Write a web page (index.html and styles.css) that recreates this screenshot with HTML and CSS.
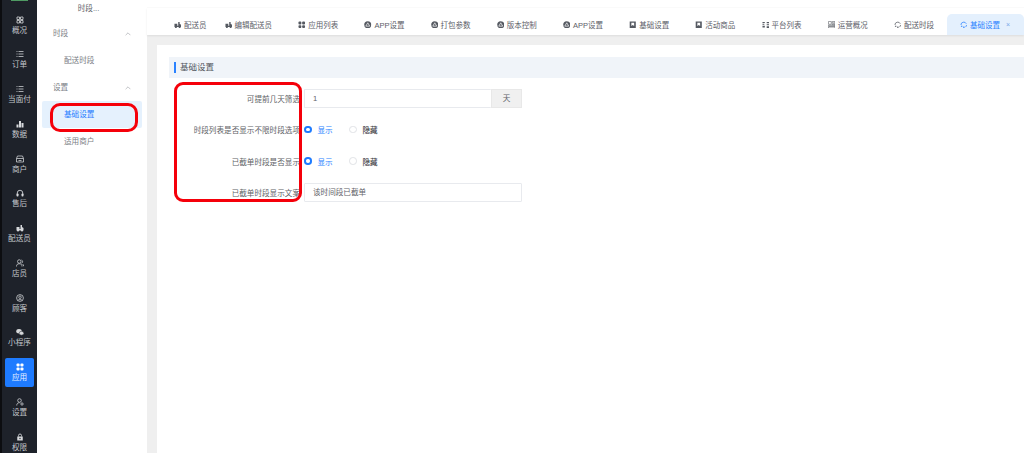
FILE: index.html
```html
<!DOCTYPE html>
<html lang="zh-CN">
<head>
<meta charset="utf-8">
<title>基础设置</title>
<link rel="stylesheet" href="styles.css">
</head>
<body>
<svg class="defs" aria-hidden="true">
  <defs>
    <symbol id="i-grid" viewBox="0 0 16 16"><path d="M2 2h5v5H2zM9 2h5v5H9zM2 9h5v5H2zM9 9h5v5H9z" fill="none" stroke="currentColor" stroke-width="1.6"/></symbol>
    <symbol id="i-list" viewBox="0 0 16 16"><path d="M5 3h10M5 8h10M5 13h10M1 3h2M1 8h2M1 13h2" fill="none" stroke="currentColor" stroke-width="1.5"/></symbol>
    <symbol id="i-bars" viewBox="0 0 16 16"><path d="M1 9h4v6H1zM6 2h4v13H6zM11 6h4v9h-4z" fill="currentColor"/></symbol>
    <symbol id="i-store" viewBox="0 0 16 16"><path d="M3 2h10l2 5v7H1V7zM1 7h14M5 11h6" fill="none" stroke="currentColor" stroke-width="1.5"/></symbol>
    <symbol id="i-head" viewBox="0 0 16 16"><path d="M2.500 10V8a5.500 5.500 0 0 1 11 0v2" fill="none" stroke="currentColor" stroke-width="1.700"/><rect x="1" y="9" width="4" height="6" rx="1.500" fill="currentColor"/><rect x="11" y="9" width="4" height="6" rx="1.500" fill="currentColor"/></symbol>
    <symbol id="i-courier" viewBox="0 0 16 16"><path d="M1 6h6v4h2V2h3v4l3 2v5H1z" fill="currentColor"/><circle cx="4" cy="13" r="2.200" fill="currentColor"/><circle cx="12" cy="13" r="2.200" fill="currentColor"/></symbol>
    <symbol id="i-people" viewBox="0 0 16 16"><circle cx="6.500" cy="5" r="3.500" fill="none" stroke="currentColor" stroke-width="1.500"/><path d="M1 15c0-4 2-5.500 5.500-5.500S12 11 12 15M11 2a3.500 3.500 0 0 1 0 6.500M13 10c1.500.7 2.300 2.500 2.300 4.500" fill="none" stroke="currentColor" stroke-width="1.500"/></symbol>
    <symbol id="i-face" viewBox="0 0 16 16"><circle cx="8" cy="8" r="6.800" fill="none" stroke="currentColor" stroke-width="1.500"/><circle cx="8" cy="6.500" r="2.500" fill="none" stroke="currentColor" stroke-width="1.400"/><path d="M3.500 13c1-2.500 8-2.500 9 0" fill="none" stroke="currentColor" stroke-width="1.400"/></symbol>
    <symbol id="i-chat" viewBox="0 0 16 16"><ellipse cx="6" cy="6.500" rx="5.500" ry="4.500" fill="currentColor"/><ellipse cx="11" cy="10.500" rx="4.700" ry="3.800" fill="currentColor" stroke="#1e222a"/></symbol>
    <symbol id="i-apps" viewBox="0 0 16 16"><rect x="1" y="1" width="6.200" height="6.200" rx="2" fill="currentColor"/><rect x="8.800" y="1" width="6.200" height="6.200" rx="2" fill="currentColor"/><rect x="1" y="8.800" width="6.200" height="6.200" rx="2" fill="currentColor"/><rect x="8.800" y="8.800" width="6.200" height="6.200" rx="2" fill="currentColor"/></symbol>
    <symbol id="i-admin" viewBox="0 0 16 16"><circle cx="7" cy="5" r="3.600" fill="none" stroke="currentColor" stroke-width="1.500"/><path d="M1.500 15c0-4 2.300-5.500 5.500-5.500" fill="none" stroke="currentColor" stroke-width="1.500"/><circle cx="12" cy="12" r="2.300" fill="none" stroke="currentColor" stroke-width="1.500"/></symbol>
    <symbol id="i-lock" viewBox="0 0 16 16"><path d="M5 7V5a3 3 0 0 1 6 0v2" fill="none" stroke="currentColor" stroke-width="1.700"/><path d="M2.500 7h11v8h-11z" fill="currentColor"/><circle cx="8" cy="11" r="1.300" fill="#1e222a"/></symbol>
    <symbol id="i-app" viewBox="0 0 16 16"><circle cx="8" cy="8" r="7.500" fill="currentColor"/><path d="M8 3.800 12.200 11H3.800z" fill="none" stroke="#fff" stroke-width="1.500"/></symbol>
    <symbol id="i-mark" viewBox="0 0 16 16"><path d="M1.500 1h13v14h-13z" fill="currentColor"/><path d="M5 3.500h6v7L8 8.500l-3 2z" fill="#fff"/></symbol>
    <symbol id="i-split" viewBox="0 0 16 16"><path d="M1 2h5v2H1zM1 6h4v2H1zM10 2h5v2h-5zM10 6h5v2h-5zM1 10h5v4H1zM10 10h5v2h-5zM10 13h5v2h-5z" fill="currentColor"/></symbol>
    <symbol id="i-board" viewBox="0 0 16 16"><path d="M1 1h6v6H1zM9 1h6v3H9zM9 6h6v2H9zM1 9h14v2H1zM1 12h14v3H1z" fill="none" stroke="currentColor" stroke-width="1.200"/></symbol>
    <symbol id="i-sync" viewBox="0 0 16 16"><path d="M2 8.500a6 6 0 0 1 11.500-2.500M14 8.500a6 6 0 0 1-2.500 4.500" fill="none" stroke="currentColor" stroke-width="1.600"/><path d="M2 10h3v2H2zM7 11.500h2.500V15H7z" fill="currentColor"/></symbol>
    <symbol id="i-up" viewBox="0 0 10 6"><path d="M1 5 5 1l4 4" fill="none" stroke="currentColor" stroke-width="1"/></symbol>
  </defs>
</svg>

<div class="app">
  <nav class="rail">
    <div class="rail-logo"></div>
    <a class="rail-item"><svg class="rail-icon"><use href="#i-grid"/></svg><span>概况</span></a>
    <a class="rail-item"><svg class="rail-icon"><use href="#i-list"/></svg><span>订单</span></a>
    <a class="rail-item"><svg class="rail-icon"><use href="#i-list"/></svg><span>当面付</span></a>
    <a class="rail-item"><svg class="rail-icon"><use href="#i-bars"/></svg><span>数据</span></a>
    <a class="rail-item"><svg class="rail-icon"><use href="#i-store"/></svg><span>商户</span></a>
    <a class="rail-item"><svg class="rail-icon"><use href="#i-head"/></svg><span>售后</span></a>
    <a class="rail-item"><svg class="rail-icon"><use href="#i-courier"/></svg><span>配送员</span></a>
    <a class="rail-item"><svg class="rail-icon"><use href="#i-people"/></svg><span>店员</span></a>
    <a class="rail-item"><svg class="rail-icon"><use href="#i-face"/></svg><span>顾客</span></a>
    <a class="rail-item"><svg class="rail-icon"><use href="#i-chat"/></svg><span>小程序</span></a>
    <a class="rail-item is-active"><svg class="rail-icon"><use href="#i-apps"/></svg><span>应用</span></a>
    <a class="rail-item"><svg class="rail-icon"><use href="#i-admin"/></svg><span>设置</span></a>
    <a class="rail-item"><svg class="rail-icon"><use href="#i-lock"/></svg><span>权限</span></a>
  </nav>

  <aside class="submenu">
    <div class="submenu-title">时段...</div>
    <div class="submenu-group">时段<svg class="chev"><use href="#i-up"/></svg></div>
    <a class="submenu-item">配送时段</a>
    <div class="submenu-group">设置<svg class="chev"><use href="#i-up"/></svg></div>
    <a class="submenu-item is-active">基础设置</a>
    <a class="submenu-item">适用商户</a>
  </aside>

  <main class="main">
    <div class="topstrip"></div>
    <div class="tabs">
      <a class="tab tab-first"><svg class="tab-icon"><use href="#i-courier"/></svg>配送员</a>
      <a class="tab"><svg class="tab-icon"><use href="#i-courier"/></svg>编辑配送员</a>
      <a class="tab"><svg class="tab-icon"><use href="#i-apps"/></svg>应用列表</a>
      <a class="tab"><svg class="tab-icon"><use href="#i-app"/></svg>APP设置</a>
      <a class="tab"><svg class="tab-icon"><use href="#i-app"/></svg>打包参数</a>
      <a class="tab"><svg class="tab-icon"><use href="#i-app"/></svg>版本控制</a>
      <a class="tab"><svg class="tab-icon"><use href="#i-app"/></svg>APP设置</a>
      <a class="tab"><svg class="tab-icon"><use href="#i-mark"/></svg>基础设置</a>
      <a class="tab"><svg class="tab-icon"><use href="#i-mark"/></svg>活动商品</a>
      <a class="tab"><svg class="tab-icon"><use href="#i-split"/></svg>平台列表</a>
      <a class="tab"><svg class="tab-icon"><use href="#i-board"/></svg>运营概况</a>
      <a class="tab"><svg class="tab-icon"><use href="#i-sync"/></svg>配送时段</a>
      <a class="tab is-active"><svg class="tab-icon"><use href="#i-sync"/></svg>基础设置<span class="tab-close">×</span></a>
    </div>
    <div class="content">
      <section class="card">
        <h2 class="section-title">基础设置</h2>
        <form class="form">
          <div class="form-row">
            <label class="form-label">可提前几天筛选</label>
            <div class="input-group">
              <div class="input input-joined">1</div>
              <div class="addon">天</div>
            </div>
          </div>
          <div class="form-row">
            <label class="form-label">时段列表是否显示不限时段选项</label>
            <div class="radios">
              <span class="radio is-on"><i class="radio-dot"></i>显示</span>
              <span class="radio"><i class="radio-dot"></i>隐藏</span>
            </div>
          </div>
          <div class="form-row">
            <label class="form-label">已截单时段是否显示</label>
            <div class="radios">
              <span class="radio is-on"><i class="radio-dot"></i>显示</span>
              <span class="radio"><i class="radio-dot"></i>隐藏</span>
            </div>
          </div>
          <div class="form-row">
            <label class="form-label">已截单时段显示文案</label>
            <div class="input-group"><div class="input">该时间段已截单</div></div>
          </div>
        </form>
      </section>
    </div>
  </main>

  <div class="mark mark-menu"></div>
  <div class="mark mark-labels"></div>
</div>
</body>
</html>
```

FILE: styles.css
```css
* { box-sizing: border-box; }
html, body { margin: 0; height: 100%; overflow: hidden; }
body {
  font-family: "Liberation Sans", "Noto Sans CJK SC", sans-serif;
  font-size: 7.6px;
  color: #606266;
  background: #fff;
}
.defs { position: absolute; width: 0; height: 0; }
.app { position: relative; display: flex; width: 1024px; height: 453px; overflow: hidden; }

/* rail */
.rail {
  flex: 0 0 37px;
  background: #1e222a;
  border-left: 2px solid #0c0d10;
  padding: 0 3px;
  display: flex;
  flex-direction: column;
  gap: 5.75px;
  align-items: center;
}
.rail-logo { flex: none; width: 17px; height: 1px; margin-bottom: 3.75px; background: #4f9b63; }
.rail-item {
  flex: none;
  width: 29px;
  height: 29px;
  border-radius: 2px;
  display: flex;
  flex-direction: column;
  align-items: center;
  justify-content: flex-end;
  gap: 1px;
  color: #c3c6cb;
  line-height: 11px;
  padding-bottom: 4px;
}
.rail-item.is-active { background: #1e7bff; color: #e9f2ff; }
.rail-icon { width: 8px; height: 8px; color: #d6d8db; }
.rail-item.is-active .rail-icon { color: #fff; }

/* submenu */
.submenu { flex: 0 0 110px; background: #fff; padding: 0 5px; }
.submenu-title { height: 20px; padding: 3px 7px 0 0; line-height: 11px; text-align: center; color: #5f6268; }
.submenu-group, .submenu-item { height: 27px; line-height: 27px; display: flex; align-items: center; }
.submenu-group { padding: 0 11px 0 11px; justify-content: space-between; color: #7b7e85; }
.submenu-item { padding-left: 22px; color: #7b7e85; border-radius: 2px; }
.submenu-item.is-active { background: #e5f1fd; color: #1f7cff; }
.chev { width: 6px; height: 4px; color: #9a9da3; }

/* main */
.main { flex: 1; min-width: 0; display: flex; flex-direction: column; background: #efefef; }
.topstrip { flex: none; height: 8px; background: #fff; border-bottom: 1px solid #fbfbfb; }
.tabs {
  flex: none;
  height: 27px;
  padding-left: 27px;
  display: flex;
  align-items: flex-end;
  background: #fff;
  box-shadow: 0 1px 2px rgba(0, 0, 0, .08);
  position: relative;
}
.tab {
  flex: none;
  height: 21px;
  min-width: 66.2px;
  display: flex;
  align-items: center;
  padding: 0 26.2px 0 0;
  font-size: 7.5px;
  color: #5d6068;
  white-space: nowrap;
}
.tab-first { min-width: 0; padding-right: 18px; }
.tab-icon { flex: none; width: 7.5px; height: 7.5px; margin-right: 2.5px; color: #555961; }
.tab.is-active {
  min-width: 76.5px;
  margin-left: -13px;
  padding-left: 13px;
  padding-right: 0;
  background: #e4f0fd;
  border-radius: 5px 5px 0 0;
  color: #2a82ff;
}
.tab.is-active .tab-icon { color: #2a82ff; }
.tab-close { margin-left: 6px; font-size: 7px; color: #7aa8e8; }

.content { flex: 1; min-height: 0; padding: 10px 0 0 10px; }
.card { height: 100%; background: #fff; padding: 12px 0 0 12px; }
.section-title {
  margin: 0;
  height: 21px;
  background: #f0f4f9;
  font-size: 8.5px;
  font-weight: 400;
  line-height: 21px;
  color: #50545c;
  position: relative;
  padding-left: 11px;
}
.section-title::before {
  content: "";
  position: absolute;
  left: 5px;
  top: 5px;
  width: 2px;
  height: 11px;
  background: #2a82ff;
}

/* form */
.form { padding-top: 10.5px; display: flex; flex-direction: column; }
.form-row { display: flex; align-items: center; height: 19px; margin-bottom: 12.5px; }
.form-label { flex: 0 0 131px; text-align: right; color: #606266; white-space: nowrap; }
.input-group { margin-left: 4px; width: 218px; height: 19px; display: flex; }
.input {
  flex: 1;
  border: 1px solid #e8eaee;
  border-radius: 1px;
  line-height: 17px;
  padding-left: 8px;
  color: #5f6268;
}
.input-joined { border-right: 0; }
.addon {
  flex: 0 0 31px;
  background: #f0f0f0;
  border: 1px solid #e8e8e8;
  text-align: center;
  line-height: 17px;
  color: #5f6268;
}
.radios { margin-left: 4px; display: flex; }
.radio { width: 45px; display: flex; align-items: center; gap: 6px; color: #3e4046; font-weight: 500; }
.radio.is-on { color: #2a82ff; font-weight: 400; }
.radio-dot { flex: none; width: 7.5px; height: 7.5px; border-radius: 50%; border: 1px solid #e0e2e6; background: #fff; }
.radio.is-on .radio-dot { background: #fff; border: 2.5px solid #1e7bff; }

/* hand-drawn annotation overlays */
.mark { position: absolute; border: 3px solid #f5000a; pointer-events: none; }
.mark-menu { left: 49.5px; top: 103px; width: 88.5px; height: 28.5px; border-radius: 10px; }
.mark-labels { left: 174px; top: 81.5px; width: 128px; height: 120px; border-radius: 9px; }
```
